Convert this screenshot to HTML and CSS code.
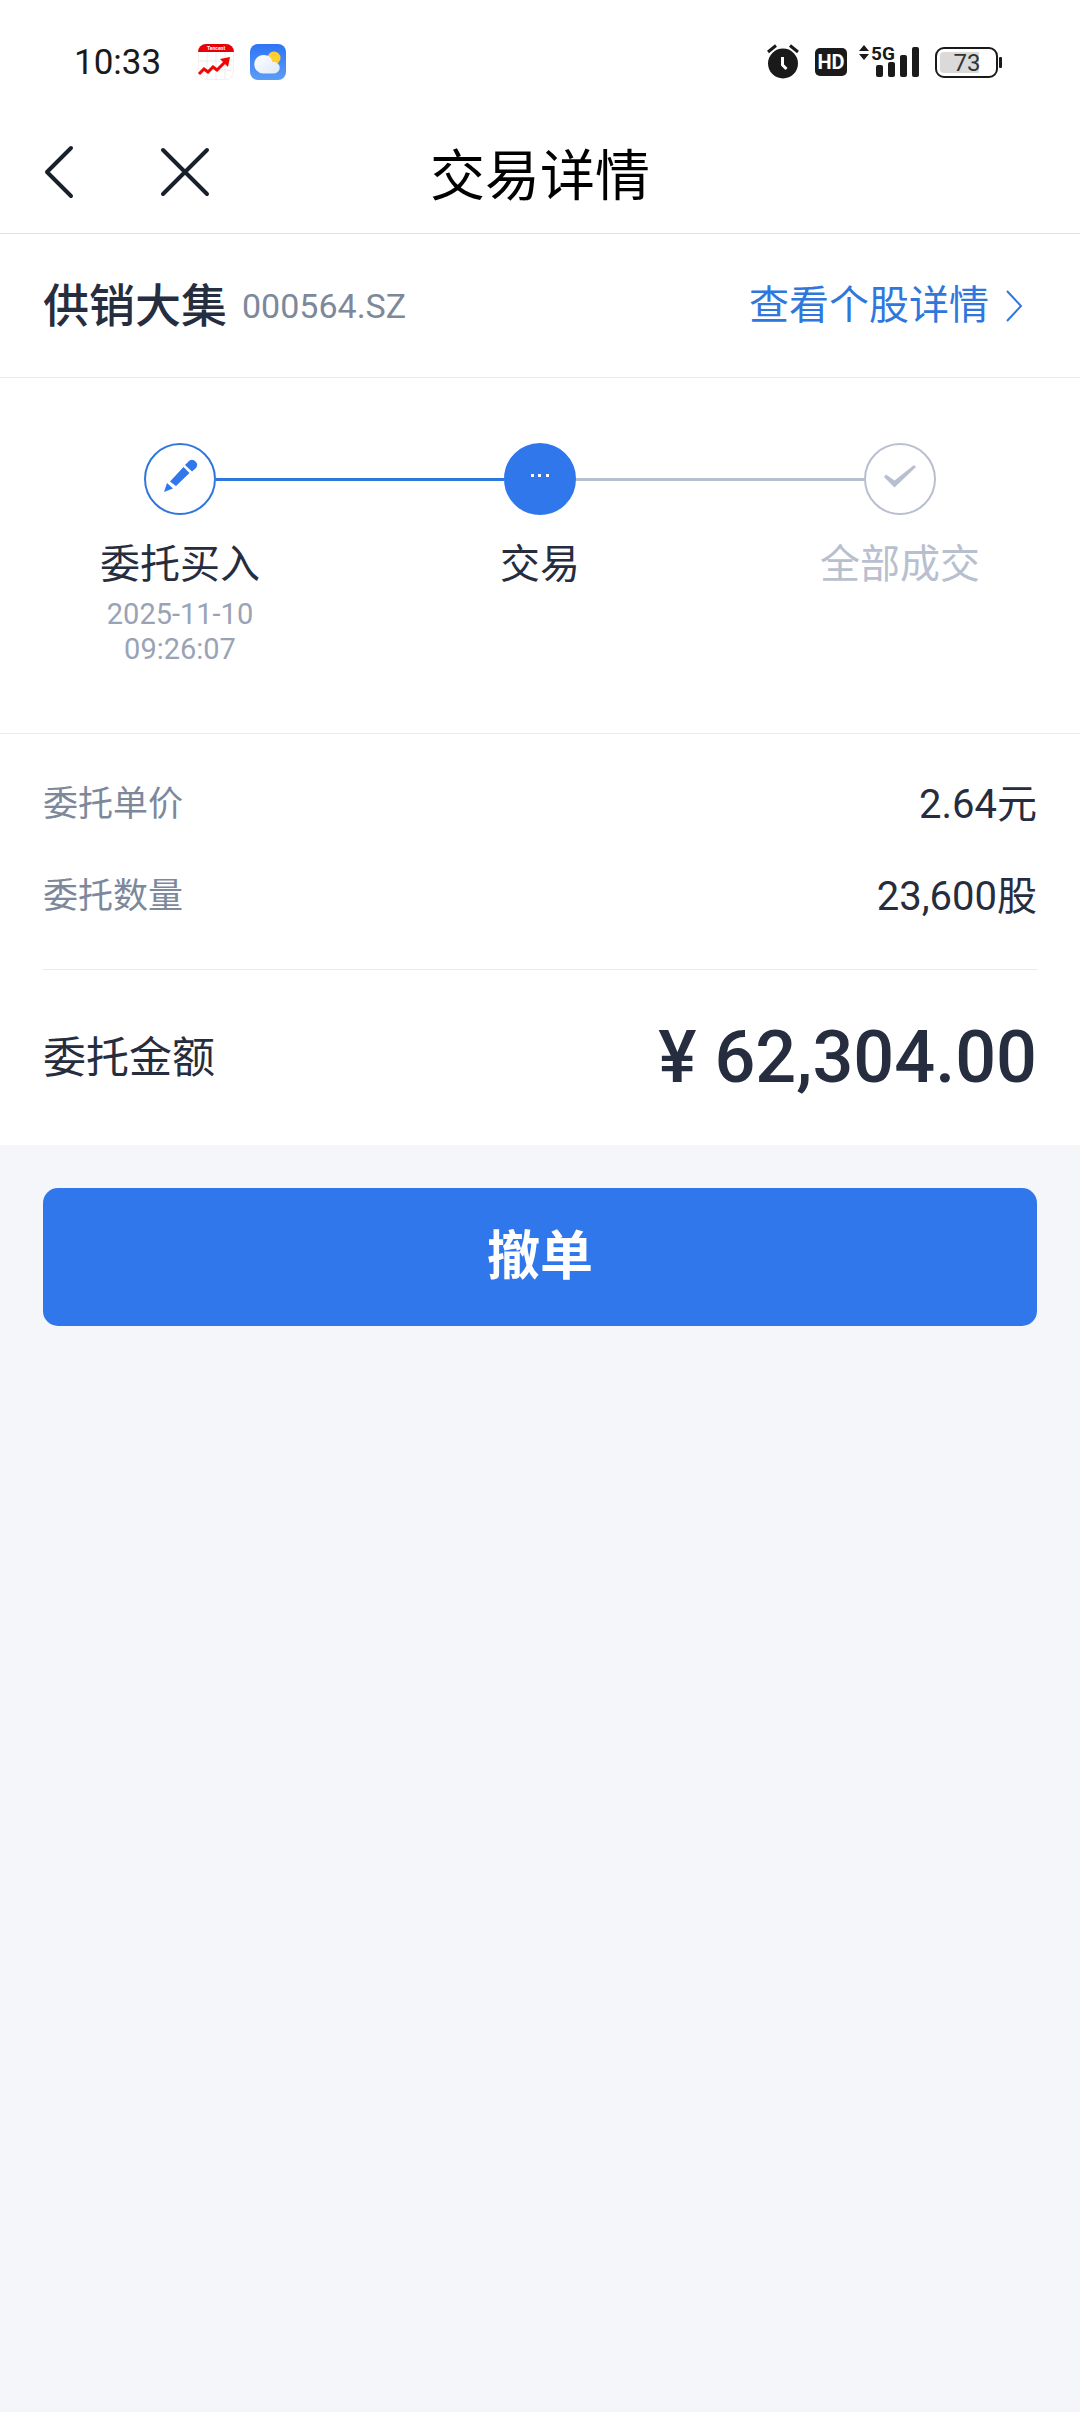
FILE: index.html
```html
<!DOCTYPE html>
<html lang="zh-CN">
<head>
    <meta charset="UTF-8">
    <meta name="viewport" content="width=device-width, initial-scale=1.0">
    <title>交易详情</title>
    <link rel="stylesheet" href="styles.css">
</head>
<body>
    <div class="status-bar">
        <div class="status-left">
            <span class="clock">10:33</span>
            <svg class="app-icon" width="36" height="36" viewBox="0 0 36 36">
                <rect x="0.5" y="0.5" width="35" height="35" rx="8" fill="#fff" stroke="#f1f1f1"/>
                <path d="M9 9v26M18 9v26M27 9v26M1 17h34M1 26h34" stroke="#ececec"/>
                <path d="M0 8a8 8 0 0 1 8-8h20a8 8 0 0 1 8 8z" fill="#e80008"/>
                <text class="app-name" x="18" y="6" text-anchor="middle">Tencent</text>
                <path d="M1 30l5-5 4 3 5-5 4 3 8-8" fill="none" stroke="#f00505" stroke-width="3"/>
                <path d="M22 15l10-2-2 10z" fill="#f00505"/>
            </svg>
            <svg class="app-icon" width="36" height="36" viewBox="0 0 36 36">
                <defs>
                    <linearGradient id="sky" x1="0" y1="0" x2="0" y2="1">
                        <stop offset="0" stop-color="#2f74f5"/>
                        <stop offset="1" stop-color="#5a9df6"/>
                    </linearGradient>
                    <linearGradient id="cloud" x1="0" y1="0" x2="1" y2="1">
                        <stop offset="0" stop-color="#fff"/>
                        <stop offset="1" stop-color="#dce9fb"/>
                    </linearGradient>
                </defs>
                <rect width="36" height="36" rx="8" fill="url(#sky)"/>
                <circle cx="24" cy="14" r="6.5" fill="#ffcf33"/>
                <path d="M14 11a9 9 0 0 1 8.500 7H24a5.700 5.700 0 0 1 0 11.500H13A9 9 0 0 1 14 11z" fill="url(#cloud)"/>
            </svg>
        </div>
        <div class="status-right">
            <svg class="alarm" width="32" height="36" viewBox="0 0 32 36">
                <path d="M1 8l8-6.500M31 8l-8-6.500" stroke="#1a1a1a" stroke-width="3"/>
                <circle cx="16" cy="19.500" r="15" fill="#1a1a1a"/>
                <path d="M15.500 13v8l4 4" fill="none" stroke="#fff" stroke-width="3"/>
            </svg>
            <span class="hd">HD</span>
            <svg width="60" height="36" viewBox="0 0 60 36">
                <path d="M0 7l5-6 5 6zM0 10h10l-5 6z" fill="#1a1a1a"/>
                <text class="network" x="12" y="16">5G</text>
                <g fill="#1a1a1a">
                    <rect x="17" y="21" width="7" height="12" rx="2"/>
                    <rect x="29" y="18" width="7" height="15" rx="2"/>
                    <rect x="41" y="11" width="7" height="22" rx="2"/>
                    <rect x="53" y="3" width="7" height="30" rx="2"/>
                </g>
            </svg>
            <svg class="battery" width="67" height="36" viewBox="0 0 67 36">
                <rect x="1" y="4" width="61" height="29" rx="8" fill="#fff" stroke="#1a1a1a" stroke-width="2"/>
                <path d="M9 8h35v21H9a4 4 0 0 1-4-4V12a4 4 0 0 1 4-4z" fill="#dadada"/>
                <rect x="64" y="13" width="3" height="11" rx="1" fill="#1a1a1a"/>
                <text class="battery-level" x="32" y="27" text-anchor="middle">73</text>
            </svg>
        </div>
    </div>

    <header class="nav">
        <div class="nav-buttons">
            <button class="nav-button" type="button" aria-label="返回">
                <svg width="32" height="56" viewBox="0 0 32 56">
                    <path d="M28 4L4 28l24 24" fill="none" stroke="#18202c" stroke-width="4" stroke-linecap="round" stroke-linejoin="round"/>
                </svg>
            </button>
            <button class="nav-button" type="button" aria-label="关闭">
                <svg width="50" height="50" viewBox="0 0 50 50">
                    <path d="M3 3l44 44M47 3L3 47" stroke="#18202c" stroke-width="4" stroke-linecap="round"/>
                </svg>
            </button>
        </div>
        <h1>交易详情</h1>
    </header>

    <main>
        <section class="stock">
            <h2>供销大集</h2>
            <span class="stock-code">000564.SZ</span>
            <a class="stock-link" href="#">查看个股详情
                <svg width="18" height="34" viewBox="0 0 18 34">
                    <path d="M2 2l14 15L2 32" fill="none" stroke="#3077dd" stroke-width="2"/>
                </svg>
            </a>
        </section>

        <ol class="steps">
            <li class="step done">
                <div class="step-track">
                    <span class="step-circle">
                        <svg width="36" height="36" viewBox="0 0 36 36" fill="#3077eb">
                            <path d="M2 34l3-9 6 5.500zM8 23.500L21.500 9l6 6L14 28zM23 7l4-4a5 5 0 0 1 7 7l-4 3.500z"/>
                        </svg>
                    </span>
                </div>
                <div class="step-label">委托买入</div>
                <time class="step-time" datetime="2025-11-10T09:26:07">2025-11-10<br>09:26:07</time>
            </li>
            <li class="step current">
                <div class="step-track">
                    <span class="step-circle">
                        <svg width="36" height="36" viewBox="0 0 36 36" fill="#fff">
                            <path d="M9 16h3v3H9zM16 16h3v3h-3zM24 16h3v3h-3z"/>
                        </svg>
                    </span>
                </div>
                <div class="step-label">交易</div>
            </li>
            <li class="step pending">
                <div class="step-track">
                    <span class="step-circle">
                        <svg width="36" height="36" viewBox="0 0 36 36" fill="#b8bfce">
                            <path d="M2 19l2-2.500 8.500 6L32 7l2 2-21.500 20.500z"/>
                        </svg>
                    </span>
                </div>
                <div class="step-label">全部成交</div>
            </li>
        </ol>

        <dl class="details">
            <div class="row">
                <dt>委托单价</dt>
                <dd>2.64元</dd>
            </div>
            <div class="row">
                <dt>委托数量</dt>
                <dd>23,600股</dd>
            </div>
            <div class="row total">
                <dt>委托金额</dt>
                <dd>¥ 62,304.00</dd>
            </div>
        </dl>
    </main>

    <div class="actions">
        <button class="cancel-button" type="button">撤单</button>
    </div>
</body>
</html>
```

FILE: styles.css
```css
* {
    box-sizing: border-box;
}

body {
    margin: 0;
    min-height: 100vh;
    background-color: #f4f6fa;
    color: #262d3f;
    font-family: Roboto, "Noto Sans CJK SC", sans-serif;
}

h1, h2, ol, dl, dd {
    margin: 0;
    padding: 0;
}

svg {
    display: block;
    flex: none;
    overflow: visible;
}

button {
    border: none;
    font-family: inherit;
    cursor: pointer;
}

/* status bar */
.status-bar {
    display: flex;
    justify-content: space-between;
    align-items: center;
    height: 110px;
    padding: 14px 78px 0 74px;
    background-color: #fff;
}

.status-left {
    display: flex;
    align-items: center;
}

.clock {
    margin-right: 21px;
    color: #1a1a1a;
    font-size: 35px;
}

.app-icon {
    margin-left: 16px;
}

.app-name {
    fill: #fff;
    font-size: 5px;
    font-weight: bold;
}

.status-right {
    display: flex;
    align-items: center;
    gap: 12px;
}

.alarm {
    margin-right: 4px;
}

.battery {
    margin-left: 4px;
}

.hd {
    width: 32px;
    border-radius: 5px;
    background-color: #1a1a1a;
    color: #fff;
    font-size: 20px;
    font-weight: bold;
    line-height: 28px;
    text-align: center;
}

.network {
    fill: #1a1a1a;
    font-size: 19px;
    font-weight: bold;
}

.battery-level {
    fill: #333;
    font-size: 24px;
}

/* title bar */
.nav {
    display: grid;
    grid-template-columns: 1fr auto 1fr;
    align-items: center;
    height: 124px;
    padding: 0 43px;
    border-bottom: 1px solid #e3e3e3;
    background-color: #fff;
}

.nav-buttons {
    display: flex;
    align-items: center;
    gap: 85px;
}

.nav-button {
    padding: 0;
    background: none;
}

.nav h1 {
    padding-top: 8px;
    color: #000;
    font-size: 55px;
    font-weight: 400;
    line-height: 80px;
}

main {
    background-color: #fff;
}

/* stock name */
.stock {
    display: flex;
    align-items: center;
    height: 144px;
    padding: 0 57px 0 43px;
    border-bottom: 1px solid #e9e9e9;
    line-height: 56px;
}

.stock h2 {
    margin-right: 15px;
    font-size: 46px;
    font-weight: 500;
}

.stock-code {
    color: #7d889b;
    font-size: 34px;
}

.stock-link {
    display: flex;
    align-items: center;
    gap: 16px;
    margin-left: auto;
    color: #3077dd;
    font-size: 40px;
    text-decoration: none;
}

/* progress steps */
.steps {
    display: grid;
    grid-template-columns: repeat(3, 1fr);
    padding: 65px 0 66px;
    border-bottom: 1px solid #e9e9e9;
    list-style: none;
    text-align: center;
}

.step-track {
    display: flex;
    align-items: center;
}

.step-track::before,
.step-track::after {
    content: "";
    flex: 1;
    height: 3px;
    background-color: #b8bfce;
}

.done .step-track::after,
.current .step-track::before {
    background-color: #3077dd;
}

.step:first-child .step-track::before,
.step:last-child .step-track::after {
    background-color: transparent;
}

.step-circle {
    display: flex;
    justify-content: center;
    align-items: center;
    width: 72px;
    height: 72px;
    padding-bottom: 6px;
    border: 2px solid #3077dd;
    border-radius: 50%;
}

.current .step-circle {
    border-color: #3077eb;
    background-color: #3077eb;
}

.pending .step-circle {
    border-color: #b8bfce;
}

.step-label {
    margin-top: 22px;
    font-size: 40px;
    line-height: 56px;
}

.pending .step-label {
    color: #b8bfce;
}

.step-time {
    display: block;
    margin-top: 4px;
    color: #9aa3b5;
    font-size: 29px;
    line-height: 35px;
}

/* order details */
.details {
    padding: 25px 43px 0;
}

.row {
    display: flex;
    justify-content: space-between;
    align-items: center;
    height: 92px;
    line-height: 56px;
}

.row dt {
    color: #7d889b;
    font-size: 35px;
}

.row dd {
    font-size: 40px;
}

.total {
    height: 176px;
    margin-top: 26px;
    border-top: 1px solid #e9e9e9;
}

.total dt {
    color: #262d3f;
    font-size: 43px;
}

.total dd {
    font-size: 72px;
    font-weight: 500;
}

/* bottom action */
.actions {
    padding: 43px;
}

.cancel-button {
    width: 100%;
    height: 138px;
    border-radius: 15px;
    background-color: #3077eb;
    color: #fff;
    font-size: 53px;
    font-weight: bold;
    line-height: 80px;
}
```
